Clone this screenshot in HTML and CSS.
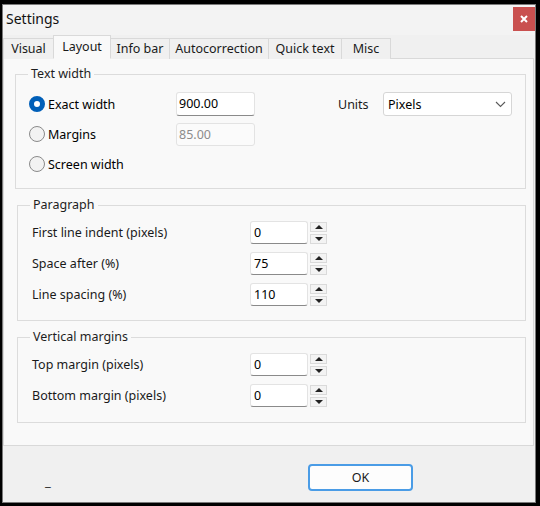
FILE: index.html
```html
<!DOCTYPE html>
<html>
<head>
<meta charset="utf-8">
<link rel="stylesheet" href="styles.css">
</head>
<body>
<div class="window">
  <div class="titlebar">
    <span class="title">Settings</span>
    <span class="close"><svg width="8" height="8" viewBox="0 0 8 8"><path d="M1 1L7 7M7 1L1 7" stroke="#fff" stroke-width="2"/></svg></span>
  </div>
  <div class="tabs">
    <div class="tab">Visual</div>
    <div class="tab active">Layout</div>
    <div class="tab">Info bar</div>
    <div class="tab">Autocorrection</div>
    <div class="tab">Quick text</div>
    <div class="tab">Misc</div>
  </div>
  <div class="panel">
    <fieldset class="group g1">
      <legend>Text width</legend>
      <div class="tw-grid">
        <label class="radio"><span class="dot on"></span>Exact width</label>
        <div class="input">900.00</div>
        <div></div>
        <div class="units">Units</div>
        <div class="select"><span>Pixels</span><svg width="11" height="7" viewBox="0 0 11 7"><path d="M1 1L5.5 5.5L10 1" fill="none" stroke="#5a5a5a" stroke-width="1.1"/></svg></div>

        <label class="radio"><span class="dot"></span>Margins</label>
        <div class="input disabled">85.00</div>
        <div></div><div></div><div></div>

        <label class="radio"><span class="dot"></span>Screen width</label>
        <div></div><div></div><div></div><div></div>
      </div>
    </fieldset>

    <fieldset class="group g2">
      <legend>Paragraph</legend>
      <div class="row"><span class="lbl">First line indent (pixels)</span><div class="input num">0</div><div class="spin"><span class="sb"><i class="up"></i></span><span class="sb"><i class="down"></i></span></div></div>
      <div class="row"><span class="lbl">Space after (%)</span><div class="input num">75</div><div class="spin"><span class="sb"><i class="up"></i></span><span class="sb"><i class="down"></i></span></div></div>
      <div class="row"><span class="lbl">Line spacing (%)</span><div class="input num">110</div><div class="spin"><span class="sb"><i class="up"></i></span><span class="sb"><i class="down"></i></span></div></div>
    </fieldset>

    <fieldset class="group g3">
      <legend>Vertical margins</legend>
      <div class="row"><span class="lbl">Top margin (pixels)</span><div class="input num">0</div><div class="spin"><span class="sb"><i class="up"></i></span><span class="sb"><i class="down"></i></span></div></div>
      <div class="row"><span class="lbl">Bottom margin (pixels)</span><div class="input num">0</div><div class="spin"><span class="sb"><i class="up"></i></span><span class="sb"><i class="down"></i></span></div></div>
    </fieldset>
  </div>
  <div class="footer">
    <span class="under">_</span>
    <button class="ok">OK</button>
  </div>
</div>
</body>
</html>
```
FILE: styles.css
```css
* { box-sizing: border-box; }
html, body { margin: 0; padding: 0; }
body {
  background: #000;
  width: 540px;
  height: 506px;
  overflow: hidden;
  font-family: "Noto Sans", "Open Sans", sans-serif;
  font-size: 12.5px;
  color: #000;
}
.window {
  margin: 4px 0 0 2px;
  width: 534px;
  height: 499px;
  border: 1px solid #7a7a7a;
  background: #f0f0f0;
  display: flex;
  flex-direction: column;
}
.titlebar {
  height: 30px;
  display: flex;
  justify-content: space-between;
  align-items: flex-start;
  background: #f3f3f3;
}
.title {
  font-size: 14px;
  line-height: 28px;
  padding-left: 3px;
  color: #111;
}
.close {
  margin-top: 2px;
  width: 22px;
  height: 24px;
  background: #c9504f;
  display: flex;
  align-items: center;
  justify-content: center;
}
.tabs {
  height: 24px;
  display: flex;
  align-items: flex-end;
  margin-bottom: -1px;
  position: relative;
  z-index: 1;
}
.tab {
  height: 21px;
  line-height: 19px;
  padding: 0;
  text-align: center;
  white-space: nowrap;
  border: 1px solid #d9d9d9;
  border-bottom: none;
  background: #f0f0f0;
  margin-right: -1px;
  color: #1a1a1a;
}
.tab:nth-child(1) { width: 51px; }
.tab:nth-child(2) { width: 58px; }
.tab:nth-child(3) { width: 60px; }
.tab:nth-child(4) { width: 100px; }
.tab:nth-child(5) { width: 74px; }
.tab:nth-child(6) { width: 50px; }
.tab.active {
  height: 24px;
  line-height: 21px;
  background: #f9f9f9;
  position: relative;
  z-index: 2;
  border-bottom: 1px solid #f9f9f9;
}
.panel {
  height: 388px;
  margin-right: 1px;
  border: 1px solid #d9d9d9;
  background: #f9f9f9;
  padding-top: 6px;
}
.group {
  border: 1px solid #dcdcdc;
  margin: 0 7px 0 11px;
  padding: 0;
  min-width: 0;
}
.group legend {
  padding: 0 3px;
  line-height: 18px;
  color: #1e1e1e;
}
.g1 { padding: 6px 13px 9px 13px; }
.g1 legend { margin-left: -1px; }
.g2 { margin-left: 13px; margin-top: 7px; padding: 3px 0 10px 14px; }
.g3 { margin-left: 13px; margin-top: 7px; padding: 3px 0 11px 14px; }
.g2 legend, .g3 legend { margin-left: -2px; }

.tw-grid {
  display: grid;
  grid-template-columns: 147px 79px 83px 45px 129px;
  grid-auto-rows: 30px;
  align-items: center;
}
.radio {
  display: flex;
  align-items: center;
  gap: 3px;
}
.dot {
  width: 16px;
  height: 16px;
  border-radius: 50%;
  border: 1px solid #8a8a8a;
  background: #f2f2f2;
}
.dot.on {
  border: 5px solid #005fb8;
  background: #fff;
}
.input {
  height: 24px;
  background: #fff;
  border: 1px solid #e3e3e3;
  border-bottom: 1px solid #8a8a8a;
  border-radius: 3px;
  padding-left: 2px;
  line-height: 22px;
}
.input.disabled {
  height: 23px;
  background: #fbfbfb;
  border-bottom-color: #e3e3e3;
  color: #8c8c8c;
}
.units { color: #1a1a1a; }
.select {
  height: 24px;
  background: #fff;
  border: 1px solid #d6d6d6;
  border-radius: 3px;
  padding: 0 5px 0 4px;
  display: flex;
  align-items: center;
  justify-content: space-between;
}
.row {
  height: 31px;
  display: flex;
  align-items: center;
}
.lbl { width: 218px; color: #1a1a1a; }
.input.num {
  width: 58px;
  height: 23px;
  padding-left: 3px;
}
.spin {
  margin-left: 2px;
  display: flex;
  flex-direction: column;
  gap: 2px;
}
.sb {
  width: 17px;
  height: 10px;
  background: #f3f3f3;
  border: 1px solid #dadada;
  display: flex;
  align-items: center;
  justify-content: center;
}
.sb i {
  width: 0;
  height: 0;
  border-left: 4px solid transparent;
  border-right: 4px solid transparent;
}
.sb i.up { border-bottom: 4px solid #222; }
.sb i.down { border-top: 4px solid #222; }

.footer {
  flex: 1;
  display: flex;
  align-items: flex-start;
  padding-top: 18px;
}
.under {
  width: 305px;
  padding-left: 42px;
  margin-top: 8px;
  line-height: 18px;
  font-size: 13px;
  color: #222;
}
.ok {
  width: 105px;
  height: 27px;
  background: #fdfdfd;
  border: 2px solid #4a9ce6;
  border-radius: 4px;
  font-family: "Noto Sans", "Open Sans", sans-serif;
  font-size: 12.5px;
  color: #1a1a1a;
  padding: 0;
}
```
